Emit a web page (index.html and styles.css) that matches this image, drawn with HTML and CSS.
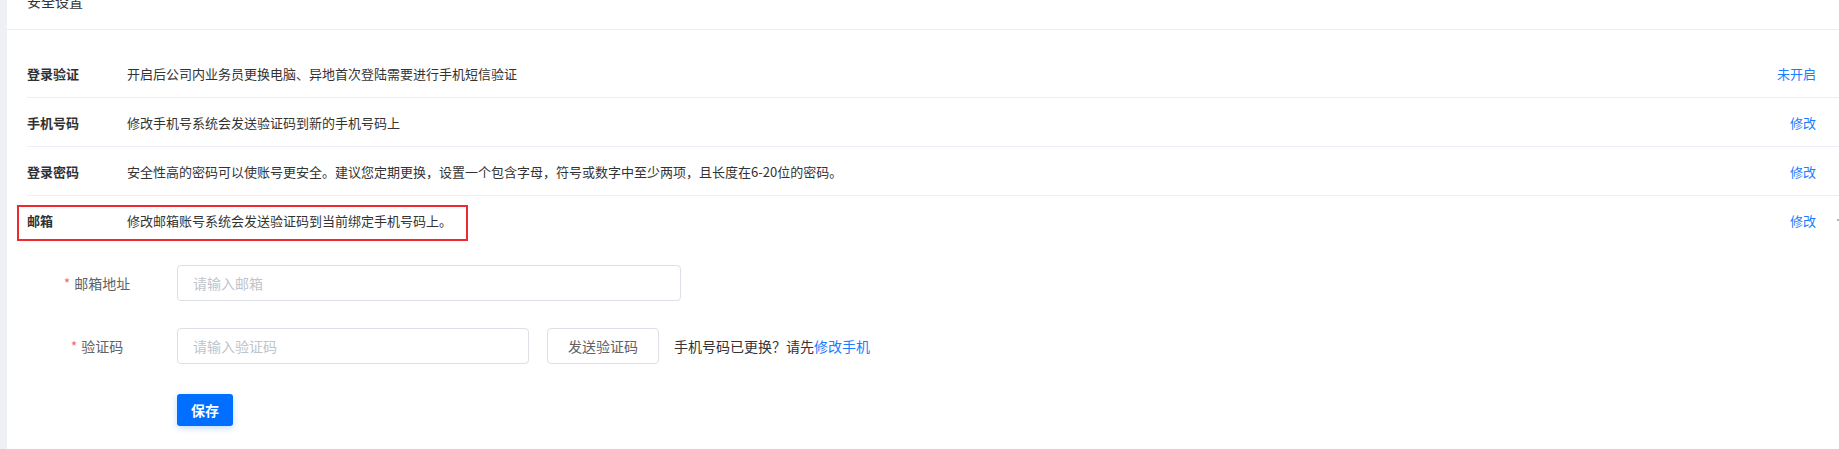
FILE: index.html
```html
<!DOCTYPE html>
<html lang="zh-CN">
  <head>
    <meta charset="UTF-8" />
    <meta name="viewport" content="width=device-width, initial-scale=1.0" />
    <title>安全设置</title>
    <link rel="stylesheet" href="styles.css">
  </head>
  <body>
    <div class="layout">
      <div class="side"></div>
      <div class="main">
        <div class="header">安全设置</div>
        <div class="list">
          <div class="item">
            <span class="name">登录验证</span>
            <span class="desc">开启后公司内业务员更换电脑、异地首次登陆需要进行手机短信验证</span>
            <a class="action">未开启</a>
          </div>
          <div class="item">
            <span class="name">手机号码</span>
            <span class="desc">修改手机号系统会发送验证码到新的手机号码上</span>
            <a class="action">修改</a>
          </div>
          <div class="item">
            <span class="name">登录密码</span>
            <span class="desc">安全性高的密码可以使账号更安全。建议您定期更换，设置一个包含字母，符号或数字中至少两项，且长度在6-20位的密码。</span>
            <a class="action">修改</a>
          </div>
          <div class="item open">
            <span class="name">邮箱</span>
            <span class="desc">修改邮箱账号系统会发送验证码到当前绑定手机号码上。</span>
            <a class="action">修改</a>
            <span class="mark"></span>
            <div class="highlight"></div>
          </div>
        </div>
        <form class="form" action="">
          <div class="form-item">
            <label class="form-label"><i>*</i>邮箱地址</label>
            <input class="input wide" type="text" placeholder="请输入邮箱" />
          </div>
          <div class="form-item">
            <label class="form-label"><i>*</i>验证码</label>
            <input class="input" type="text" placeholder="请输入验证码" />
            <button type="button" class="btn-send">发送验证码</button>
            <span class="tip">手机号码已更换？请先<a>修改手机</a></span>
          </div>
          <div class="form-actions">
            <button type="button" class="btn-save">保存</button>
          </div>
        </form>
      </div>
    </div>
  </body>
</html>
```

FILE: styles.css
```css
* {
  margin: 0;
  padding: 0;
  box-sizing: border-box;
}
body {
  font-family: "Noto Sans CJK SC", "Noto Sans", sans-serif;
  color: #333;
  background: #fff;
  overflow: hidden;
}
.layout {
  display: flex;
  height: 449px;
}
.side {
  width: 7px;
  background: #eef0f5;
}
.main {
  flex: 1;
  background: #fff;
}
.header {
  margin-top: -14px;
  padding: 0 20px 13px;
  line-height: 30px;
  font-size: 14px;
  color: #333;
  border-bottom: 1px solid #ebedf2;
}
.list {
  padding: 19px 0 0 20px;
}
.item {
  position: relative;
  display: flex;
  align-items: center;
  height: 49px;
  border-bottom: 1px solid #ebeef5;
  font-size: 13px;
}
.item.open {
  height: 48px;
  border-bottom: none;
}
.item .name {
  width: 100px;
  font-weight: bold;
  color: #303133;
}
.item .desc {
  flex: 1;
  color: #333;
}
.item .action {
  margin-right: 23px;
  color: #1a7cff;
  cursor: pointer;
}
.item.open .action {
  margin-right: 0;
}
.item .mark {
  width: 2px;
  height: 2px;
  margin-left: 21px;
  background: #b0b3b8;
}
.highlight {
  position: absolute;
  left: -10px;
  top: 9px;
  width: 451px;
  height: 36px;
  border: 2px solid #ee2a30;
}
.form {
  padding: 21px 0 0 20px;
}
.form-item {
  display: flex;
  align-items: center;
  height: 36px;
  margin-bottom: 27px;
}
.form-item + .form-item {
  margin-bottom: 30px;
}
.form-label {
  width: 140px;
  margin-right: 10px;
  text-align: center;
  font-size: 14px;
  color: #606266;
}
.form-label i {
  font-style: normal;
  color: #f56c6c;
  margin-right: 4px;
}
.input {
  width: 352px;
  height: 36px;
  padding: 0 15px;
  border: 1px solid #dcdfe6;
  border-radius: 4px;
  font-family: inherit;
  font-size: 14px;
  color: #606266;
  outline: none;
}
.input.wide {
  width: 504px;
}
.input::placeholder {
  color: #c0c4cc;
}
.btn-send {
  width: 112px;
  height: 36px;
  margin-left: 18px;
  border: 1px solid #dcdfe6;
  border-radius: 4px;
  background: #fff;
  font-family: inherit;
  font-size: 14px;
  color: #606266;
  cursor: pointer;
}
.tip {
  margin-left: 15px;
  font-size: 14px;
  color: #333;
}
.tip a {
  color: #1a7cff;
  cursor: pointer;
}
.form-actions {
  padding-left: 150px;
}
.btn-save {
  width: 56px;
  height: 32px;
  border: none;
  border-radius: 3px;
  background: #006eff;
  color: #fff;
  font-family: inherit;
  font-size: 14px;
  font-weight: bold;
  box-shadow: 0 2px 6px rgba(0, 110, 255, 0.25);
  cursor: pointer;
}
```
